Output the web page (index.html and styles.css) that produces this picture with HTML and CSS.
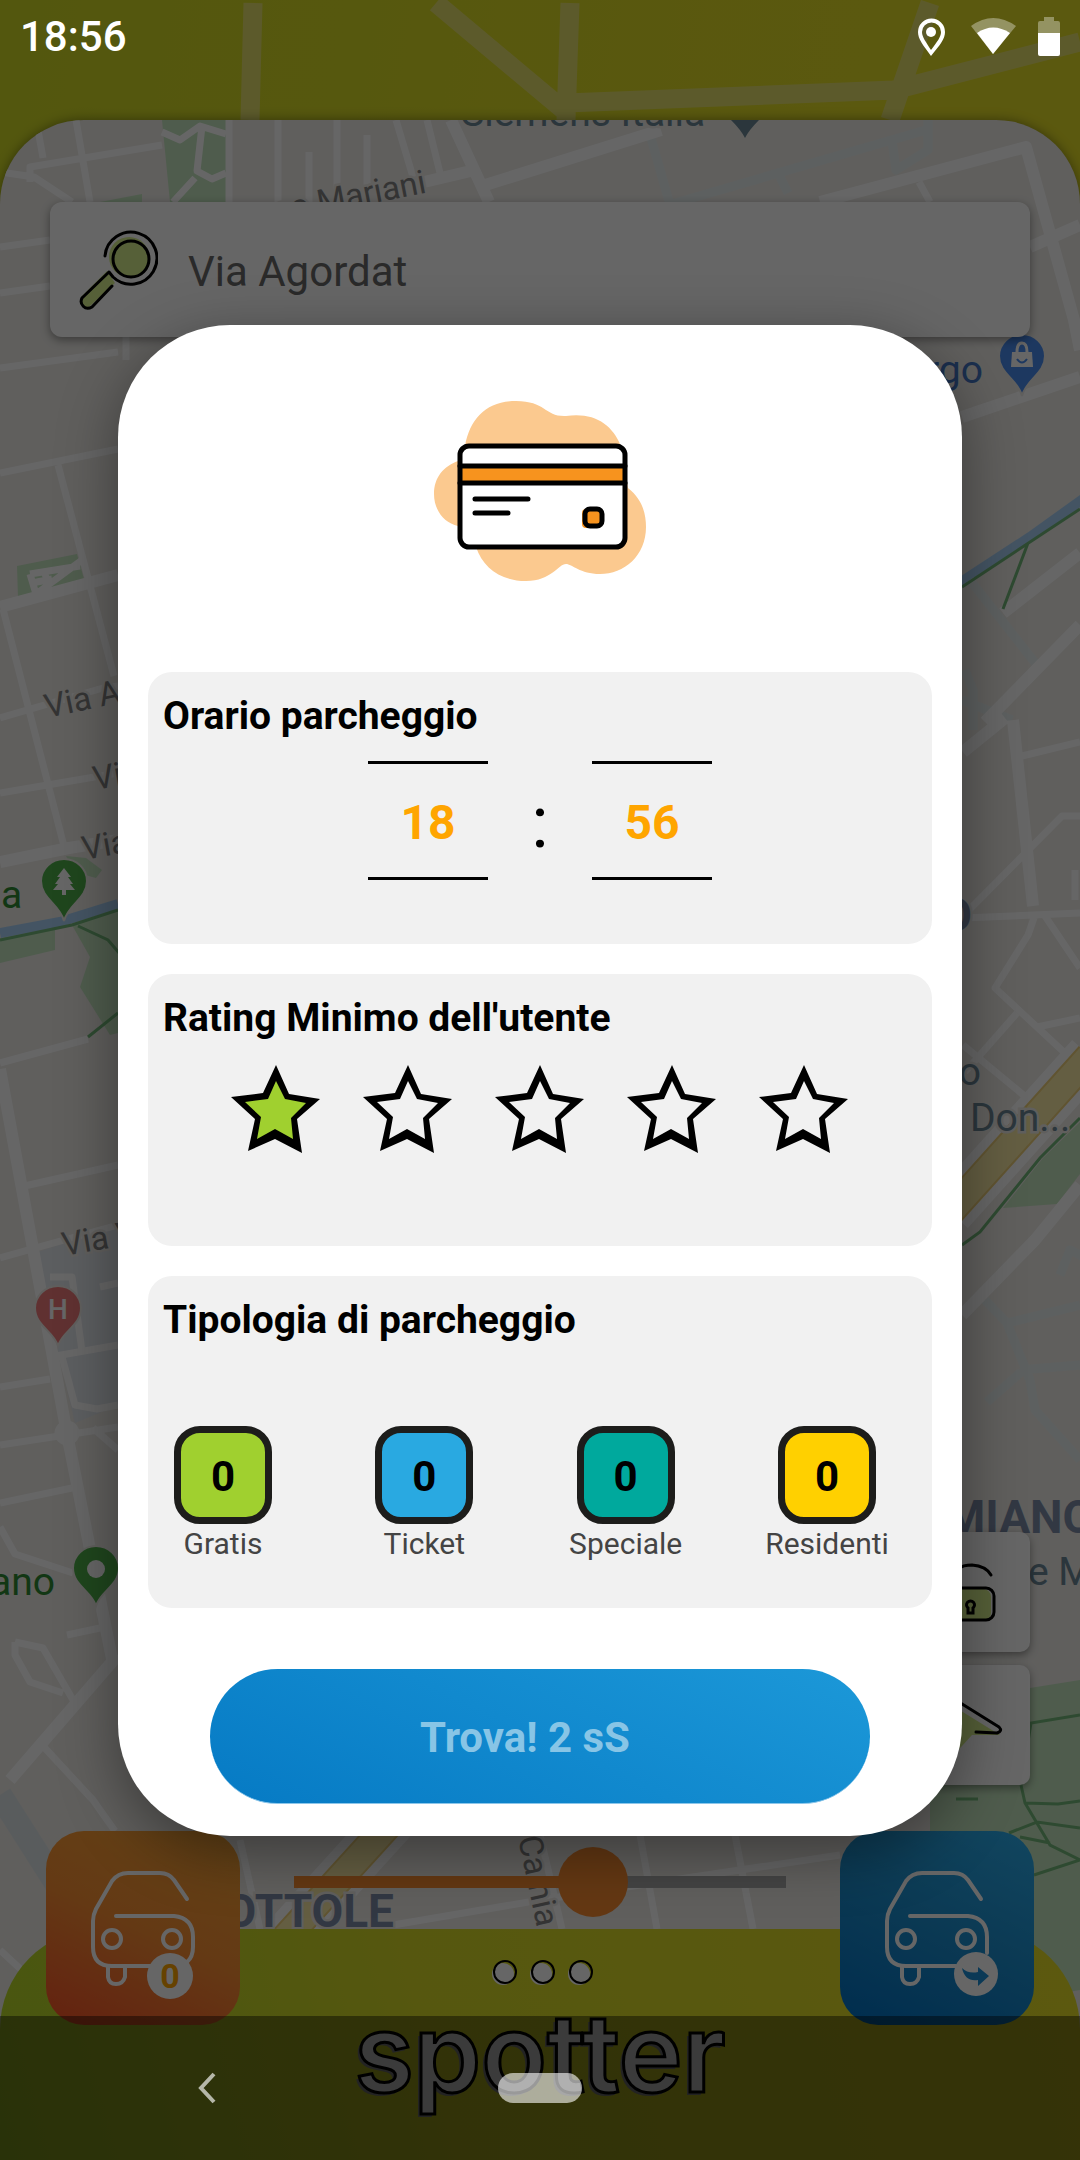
FILE: index.html
```html
<!DOCTYPE html>
<html lang="it">
<head>
  <meta charset="UTF-8" />
  <meta name="viewport" content="width=device-width, initial-scale=1.0" />
  <title>Spotter</title>
  <link rel="stylesheet" href="styles.css">
</head>
<body>
  <div class="screen">
    <svg class="header-roads" viewBox="0 0 1080 120" preserveAspectRatio="xMidYMin slice" aria-hidden="true">
      <path d="M253 3L250 120M436 3L566 112M570 3L566 120M566 103L894 90L1080 42M930 3L890 120" />
    </svg>

    <div class="map">
      <svg viewBox="0 120 1080 2040" preserveAspectRatio="xMidYMin slice" aria-hidden="true">
        <!-- parks, hospital and water -->
        <g fill="#c5e6c0">
          <path d="M162 120h64v82h-56z" />
          <path d="M100 202l42-8v8z" />
          <path d="M17 566l60-12 7 25-66 18z" />
          <path d="M0 938l55-10v22L0 963zM72 925l46-16v124l-8 2-30-48 10-30z" />
          <path d="M66 856l20 2 16 12-6 8-22-6z" />
          <path d="M1003 1208l40-50 37-36v52l-23 30z" />
          <path d="M930 1700l100-12 50-8v310l-50 8-100 0z" />
        </g>
        <path d="M35 1253l83-28v180l-43 18z" fill="#e6eaf1" />
        <path class="river" d="M0 933L60 922L118 904M955 586L1030 537L1090 494" />
        <path class="railroad" d="M0 1795L70 1905" />

        <!-- streets -->
        <g class="pale">
          <path d="M651 138L670 205M672 204L926 130M892 140l4 30 32-20v-30M780 177l8 16" />
          <path d="M970 580L1036 664M965 670l8 20v40M962 700l50 20" />
          <path d="M985 1300l22 23 73-18M1007 1323l23 57 5 30 45 50M1020 1370l60-5M987 1402l34-30M1060 1275l10-25 20 10" />
        </g>
        <g class="streets">
          <path d="M76 120L90 202M38 130L43 158M72 202L34 177L0 172M30 182v-15L162 145" />
          <path d="M229 120V202M278 120V202M337 120V202M309 152V202M367 135V202M396 120L413 177M427 120L441 177" />
          <path d="M162 132l18 8 20-14 26 8M202 126l-5 45 15 8 14-6M195 178l-22 24" />
          <path d="M0 247L50 240M0 293L50 286M919 182L930 202" />
          <path d="M0 368L118 352M126 337V360M0 473L118 449M58 465L114 676M3 609L65 850" />
          <path d="M0 718L103 688L118 686M0 793L118 773M30 574l50-8M30 574l6 20 46-34M44 571l4 12M32 583l20-4" />
          <path d="M0 1063L88 1039M20 1187L118 1165M0 1258L118 1225M0 1387L50 1379M50 1357L118 1345" />
          <path d="M50 1277h22l10 74M100 1287l18-4M62 1357l13 48 22 4 21-4M93 1428L118 1450" />
          <path d="M0 1445L118 1427M0 1503L72 1488M0 1527L15 1554L73 1573M67 1635L100 1628" />
          <path d="M15 1642l28 6 30 52M15 1642v13l15 27 33 11M43 1746L93 1800L115 1831M0 1950L28 1976" />
          <path d="M1022 756L1080 742M963 916L1062 816H1080M963 918L1080 913M1035 915l-7 20-33 53 72 67" />
          <path d="M1045 916L1080 968M963 1045L1027 1098M965 1072L1017 1013M1037 1027L1080 1018M1075 870v30" />
          <path d="M393 1925L540 1900L840 1855M240 1840l20 89M640 1835L657 1929M735 1835L753 1929M540 1835L562 1929" />
        </g>
        <g class="avenues">
          <path d="M451 120L489 202M424 182L475 170M482 186L661 130M820 202L1026 147L1074 320L1080 350" />
          <path d="M1030 247L1080 225M0 607L118 575M0 862L69 848L118 840M962 417L1080 377" />
          <path d="M1003 613L1080 553M985 722L1080 625M963 752L1005 718M1013 720L1033 906" />
          <path d="M0 1069L67 1434L113 1664M10 1780L118 1655M962 1315L1035 1240L1080 1185" />
        </g>
        <circle cx="67" cy="1433" r="9" fill="none" stroke="#fff" stroke-width="7" />

        <!-- yellow trunk road -->
        <path d="M950 1212L1090 1056M400 1812L270 1955" stroke="#fff" stroke-width="48" fill="none" />
        <path class="trunk-edge" d="M950 1212L1090 1056M400 1812L270 1955" />
        <path class="trunk" d="M950 1212L1090 1056M400 1812L270 1955" />

        <!-- footpaths -->
        <path class="footpath" d="M0 940L72 925L118 910M78 926l30 14 12 14M88 1037L118 1013M962 587L1080 509M1028 543L1003 609
          M962 1245l18-13 60-74 40-40M956 1799h22M1021 1785l4 18 25 42 30 15M1025 1803l33 1 22-3M1009 1833l28-11 43 6M1020 1837l30 6M1034 1875l46-15M1021 1785l10-62 49-8" />

        <!-- labels -->
        <g class="label">
          <text class="poi" x="461" y="126">Siemens Italia</text>
          <text class="street" x="276" y="222" transform="rotate(-11 276 222)">so Mariani</text>
          <text class="street" x="47" y="718" transform="rotate(-12 47 718)">Via A</text>
          <text class="street" x="95" y="790" transform="rotate(-10 95 790)">Vi</text>
          <text class="street" x="84" y="860" transform="rotate(-10 84 860)">Via</text>
          <text class="street" x="64" y="1256" transform="rotate(-10 64 1256)">Via V</text>
          <text class="park" x="1" y="908">a</text>
          <text class="park" x="55" y="1595" text-anchor="end">ano</text>
          <text class="shop" x="983" y="383" text-anchor="end">rgo</text>
          <text class="district" x="972" y="931" text-anchor="end">O</text>
          <text class="poi" x="981" y="1085" text-anchor="end">o</text>
          <text class="poi" x="970" y="1131">Don...</text>
          <text class="district" x="945" y="1533">MIANO</text>
          <text class="poi" x="1028" y="1585">e M</text>
          <text class="district" x="394" y="1927" text-anchor="end">OTTOLE</text>
          <text class="street" x="518" y="1838" transform="rotate(78 518 1838)">Ca nia</text>
        </g>

        <!-- pins -->
        <path d="M731 120h28q-10 10-14 18q-4-8-14-18z" fill="#6b8796" />
        <g transform="translate(64 882)">
          <path class="pin" fill="#4eb04a" d="M0 39C-4 22-23 17-23-1A23 22 0 0 1 23-1C23 17 4 22 0 39z" />
          <path fill="#fff" d="M0-14L7-5H4L9 2H6L11 8H2V13H-2V8H-11L-6 2H-9L-4-5H-7z" />
        </g>
        <g transform="translate(1022 357)">
          <path class="pin" fill="#4a8df0" d="M0 39C-4 22-23 17-23-1A23 22 0 0 1 23-1C23 17 4 22 0 39z" />
          <path fill="#fff" d="M-10-5H10L11 10H-11z" />
          <path d="M-5-5q0-9 5-9t5 9" fill="none" stroke="#fff" stroke-width="3" />
          <path d="M-5 2q5 7 10 0" fill="none" stroke="#4a8df0" stroke-width="2" />
        </g>
        <g transform="translate(58 1309)">
          <path class="pin" fill="#f07c7c" d="M0 37C-4 22-23 17-23-1A23 22 0 0 1 23-1C23 17 4 22 0 37z" />
          <text class="pin-letter" x="0" y="10" text-anchor="middle">H</text>
        </g>
        <g transform="translate(96 1569)">
          <path class="pin" fill="#4eb04a" d="M0 37C-4 22-23 17-23-1A23 22 0 0 1 23-1C23 17 4 22 0 37z" />
          <circle r="9" fill="#fff" />
        </g>
      </svg>
    </div>

    <main class="content">
      <label class="search">
        <svg width="80" height="80" viewBox="78 228 80 80" aria-hidden="true">
          <circle cx="129" cy="255" r="20" fill="#d7f08c" />
          <path d="M107 269l8 12-26 24q-10 2-8-10z" fill="#d7f08c" />
          <g fill="none" stroke="#000" stroke-width="3" stroke-linecap="round" stroke-linejoin="round">
            <circle cx="131" cy="257" r="18" />
            <path d="M105 254A26 26 0 1 1 113 275L109 270L82 296C79 302 85 309 92 305L112 284" />
          </g>
        </svg>
        <input type="text" value="Via Agordat" aria-label="Indirizzo" />
      </label>

      <div class="tools">
        <button class="tool" aria-label="Blocca">
          <svg width="80" height="80" viewBox="0 0 80 80" aria-hidden="true">
            <rect x="6" y="37" width="55" height="32" rx="8" fill="#d7f08c" />
            <rect x="6" y="36" width="58" height="32" rx="8" class="line" />
            <path class="line" d="M22 36V28Q24 13 42 13Q56 14 61 23" />
            <path d="M38 56a4 4 0 1 1 5 0v5h-5z" fill="none" stroke="#000" stroke-width="3" />
          </svg>
        </button>
        <button class="tool" aria-label="Centra la mappa">
          <svg width="80" height="80" viewBox="0 0 80 80" aria-hidden="true">
            <path d="M2 8L70 50H42L22 72z" fill="#d7f08c" />
            <path class="line" d="M46 47L67 48Q73 46 69 42L8 4Q2 2 4 8L18 66" />
          </svg>
        </button>
      </div>
    </main>

    <footer class="dock">
      <button class="car car-orange" aria-label="Lascia parcheggio">
        <svg viewBox="0 0 194 194" aria-hidden="true">
          <g class="car-line">
            <path d="M141 68L128 49Q123 42 114 42H82Q72 42 66 50L50 78Q47 84 47 90V116Q47 135 66 135H110M70 85H128Q147 87 147 106V116Q147 126 141 131" />
            <circle cx="66" cy="108" r="9" /><circle cx="126" cy="108" r="9" />
            <path d="M62 135V146Q63 153 70 153T79 146V135" />
          </g>
          <circle cx="124" cy="145" r="23" fill="#fff" />
          <text class="car-count" x="124" y="157" text-anchor="middle">0</text>
        </svg>
      </button>

      <div class="brand">
        <input class="radius" type="range" min="0" max="1000" value="625" aria-label="Raggio" />
        <svg class="dots" width="108" height="28" viewBox="-3 0 108 28" aria-hidden="true">
          <g fill="#fff"><circle cx="14" cy="15" r="11" /><circle cx="52" cy="15" r="11" /><circle cx="90" cy="15" r="11" /></g>
          <g fill="none" stroke="#000" stroke-width="2"><circle cx="16" cy="13" r="11" /><circle cx="54" cy="13" r="11" /><circle cx="92" cy="13" r="11" /></g>
        </svg>
        <span class="logo">spotter</span>
      </div>

      <button class="car car-blue" aria-label="Cerca parcheggio">
        <svg viewBox="0 0 194 194" aria-hidden="true">
          <g class="car-line">
            <path d="M141 68L128 49Q123 42 114 42H82Q72 42 66 50L50 78Q47 84 47 90V116Q47 135 66 135H116M70 85H128Q147 87 147 106V122" />
            <circle cx="66" cy="108" r="9" /><circle cx="126" cy="108" r="9" />
            <path d="M62 135V146Q63 153 70 153T79 146V135" />
          </g>
          <circle cx="136" cy="143" r="22" fill="#fff" />
          <path d="M122 137Q128 143 138 141V136L149 145L138 155V149Q125 151 122 137z" fill="#1c8fd6" />
        </svg>
      </button>
    </footer>
  </div>

  <div class="scrim">
    <form class="modal" role="dialog" aria-label="Cerca parcheggio">
      <svg class="hero" width="212" height="180" viewBox="434 401 212 180" aria-hidden="true">
        <path fill="#fbc98f" d="M465 446C470 418 487 401 516 401C546 401 545 417 566 416C594 412 612 424 621 446L628 488C642 499 646 513 646 527C646 556 624 574 600 574C580 574 572 564 566 564C558 564 552 581 526 581C501 581 483 568 476 547L458 526C444 523 434 510 434 494C434 477 444 466 458 461z" />
        <rect x="460" y="446" width="165" height="101" rx="9" fill="#fff" />
        <path fill="#f7931e" d="M460 467h165v16H460z" />
        <rect x="582" y="509" width="18" height="19" rx="4" fill="#f7931e" />
        <g fill="none" stroke="#000" stroke-width="5" stroke-linecap="round">
          <rect x="460" y="446" width="165" height="101" rx="9" />
          <path d="M460 466H625M460 483H625M475 499H528M475 513H508" />
          <rect x="585" y="509" width="17" height="17" rx="5" />
        </g>
      </svg>

      <section class="card">
        <h2>Orario parcheggio</h2>
        <div class="time">
          <input type="text" inputmode="numeric" value="18" aria-label="Ore" />
          <span>:</span>
          <input type="text" inputmode="numeric" value="56" aria-label="Minuti" />
        </div>
      </section>

      <section class="card">
        <h2>Rating Minimo dell'utente</h2>
        <div class="rating">
          <label><input type="radio" name="rating" value="1" aria-label="1 stella" checked />
            <svg viewBox="0 0 90 90"><path class="edge" d="M45 1L58 30L89 35L66 55L71 89L44 75L17 87L24 55L0 33L32 29z" /><path class="fill" d="M45 17L54 35L75 39L60 54L62 75L44 65L26 75L30 53L14 38L37 35z" /></svg></label>
          <label><input type="radio" name="rating" value="2" aria-label="2 stelle" />
            <svg viewBox="0 0 90 90"><path class="edge" d="M45 1L58 30L89 35L66 55L71 89L44 75L17 87L24 55L0 33L32 29z" /><path class="fill" d="M45 17L54 35L75 39L60 54L62 75L44 65L26 75L30 53L14 38L37 35z" /></svg></label>
          <label><input type="radio" name="rating" value="3" aria-label="3 stelle" />
            <svg viewBox="0 0 90 90"><path class="edge" d="M45 1L58 30L89 35L66 55L71 89L44 75L17 87L24 55L0 33L32 29z" /><path class="fill" d="M45 17L54 35L75 39L60 54L62 75L44 65L26 75L30 53L14 38L37 35z" /></svg></label>
          <label><input type="radio" name="rating" value="4" aria-label="4 stelle" />
            <svg viewBox="0 0 90 90"><path class="edge" d="M45 1L58 30L89 35L66 55L71 89L44 75L17 87L24 55L0 33L32 29z" /><path class="fill" d="M45 17L54 35L75 39L60 54L62 75L44 65L26 75L30 53L14 38L37 35z" /></svg></label>
          <label><input type="radio" name="rating" value="5" aria-label="5 stelle" />
            <svg viewBox="0 0 90 90"><path class="edge" d="M45 1L58 30L89 35L66 55L71 89L44 75L17 87L24 55L0 33L32 29z" /><path class="fill" d="M45 17L54 35L75 39L60 54L62 75L44 65L26 75L30 53L14 38L37 35z" /></svg></label>
        </div>
      </section>

      <section class="card">
        <h2>Tipologia di parcheggio</h2>
        <div class="types">
          <button type="button" class="type"><span class="count free">0</span>Gratis</button>
          <button type="button" class="type"><span class="count ticket">0</span>Ticket</button>
          <button type="button" class="type"><span class="count special">0</span>Speciale</button>
          <button type="button" class="type"><span class="count resident">0</span>Residenti</button>
        </div>
      </section>

      <button type="button" class="submit">Trova! 2 sS</button>
    </form>
  </div>

  <div class="status-bar">
    <span>18:56</span>
    <svg width="142" height="40" viewBox="918 15 142 40" aria-hidden="true">
      <path fill="#fff" fill-rule="evenodd" d="M931 55C923 44 918 38 918 31A13 13 0 0 1 945 31C945 38 940 44 931 55zM931 49C937 41 941 36 941 31A9 9 0 0 0 922 31C922 36 926 41 931 49z" />
      <circle cx="931" cy="31" r="5" fill="#fff" />
      <path fill="#fff" fill-opacity=".35" d="M971 25Q993 9 1016 25L993 53z" />
      <path fill="#fff" d="M977 32Q993 21 1010 32L993 53z" />
      <path fill="#fff" fill-opacity=".35" d="M1038 32V22q0-2 2-2h4v-4h10v4h4q2 0 2 2v10z" />
      <path fill="#fff" d="M1038 32h22v21q0 2-2 2h-18q-2 0-2-2z" />
    </svg>
  </div>

  <div class="nav-bar">
    <button class="back" aria-label="Indietro">
      <svg width="18" height="32" viewBox="0 0 18 32"><path d="M16 2L3 16L16 30" fill="none" stroke="#fff" stroke-opacity=".65" stroke-width="4" /></svg>
    </button>
    <button class="home" aria-label="Home"></button>
  </div>
</body>
</html>
```
FILE: styles.css
```css
* { box-sizing: border-box; }
body { margin: 0; font-family: Roboto, "Liberation Sans", sans-serif; font-size: 42px; }
button, input { font: inherit; border: 0; padding: 0; margin: 0; color: inherit; }
button { background: none; cursor: pointer; }
svg { display: block; }

/* app */
.screen { position: relative; min-height: 100vh; display: flex; flex-direction: column; overflow: hidden; background: linear-gradient(100deg, #cfd924, #e4de26 60%); }
.header-roads { width: 100%; height: 120px; }
.header-roads path { fill: none; stroke: #e6e26c; stroke-width: 19px; }
.map { position: absolute; inset: 120px 0 0; overflow: hidden; background: #efede9; border-radius: 84px 84px 0 0; box-shadow: 0 0 12px rgba(0,0,0,0.4); }
.map svg { width: 100%; height: 100%; }
.streets path, .avenues path, .pale path { fill: none; stroke: #fff; stroke-width: 7px; stroke-linejoin: round; }
.avenues path { stroke-width: 12px; }
.pale path { stroke: #e9f1f1; stroke-width: 9px; }
.river { fill: none; stroke: #aad3f7; stroke-width: 10px; }
.railroad { fill: none; stroke: #dfe6e8; stroke-width: 24px; }
.trunk-edge { fill: none; stroke: #f0d27a; stroke-width: 30px; }
.trunk { fill: none; stroke: #fbeaa6; stroke-width: 26px; }
.footpath { fill: none; stroke: #74b87a; stroke-width: 3px; }
.label text { font-size: 39px; paint-order: stroke; stroke: #efede9; stroke-width: 5px; }
.label .poi { fill: #6b8796; }
.label .street { fill: #828282; font-size: 33px; }
.label .park { fill: #2f8a32; }
.label .shop { fill: #4475c4; }
.label .district { fill: #7d8ca8; font-size: 46px; font-weight: bold; }
.pin { stroke: #efede9; stroke-width: 2px; }
.pin-letter { fill: #fff; font-size: 28px; font-weight: 500; }

.content { position: relative; flex: 1; display: flex; flex-direction: column; justify-content: space-between; padding: 82px 50px 144px; }
.search { display: flex; align-items: center; gap: 30px; height: 135px; padding: 0 28px; background: #fff; border-radius: 12px; box-shadow: 0 3px 10px rgba(0,0,0,0.4); }
.search input { flex: 1; min-width: 0; padding-top: 4px; background: none; color: #6a6a6a; }
.tools { display: flex; flex-direction: column; align-items: flex-end; gap: 13px; }
.tool { display: grid; place-items: center; width: 120px; height: 120px; background: #fff; border-radius: 10px; box-shadow: 0 3px 8px rgba(0,0,0,0.4); }
.line { fill: none; stroke: #000; stroke-width: 3px; stroke-linecap: round; stroke-linejoin: round; }

.dock { position: relative; display: flex; justify-content: space-between; align-items: flex-start; height: 231px; padding: 0 46px; background: linear-gradient(75deg, #b4d82a, #d6da26 40%, #e6de26); border-radius: 100px 100px 0 0; }
.car { flex: none; width: 194px; height: 194px; margin-top: -98px; border-radius: 38px; }
.car-orange { background: linear-gradient(25deg, #fb5228, #fb9034 50%, #f8a838); }
.car-blue { background: linear-gradient(25deg, #0070c3, #1c8fd0 50%, #2dafee); }
.car-line { fill: none; stroke: #fff; stroke-width: 4px; stroke-linecap: round; }
.car-count { font-size: 34px; font-weight: bold; fill: #ffa500; }
.brand { display: flex; flex-direction: column; align-items: center; width: 492px; margin-top: -82px; }
.radius { appearance: none; width: 100%; height: 70px; background: linear-gradient(to right, #fa8c30 60%, #aaa 60%) center / 100% 12px no-repeat; }
.radius::-webkit-slider-thumb { appearance: none; width: 70px; height: 70px; border-radius: 50%; background: #fa8c30; }
.dots { margin-top: 42px; }
.logo { margin-top: 12px; font-family: Inter, Roboto, sans-serif; font-size: 108px; font-weight: 600; line-height: 108px; color: #fff; -webkit-text-stroke: 3px #000; text-shadow: -3px 3px 0 #999; }

/* dialog */
.scrim { position: absolute; inset: 0; display: flex; align-items: center; justify-content: center; padding: 0 118px; background: rgba(0,0,0,0.6); }
.modal { display: flex; flex-direction: column; gap: 30px; width: 100%; padding: 76px 30px 32px; background: #fff; border-radius: 112px; box-shadow: 0 16px 60px rgba(0,0,0,0.4); }
.hero { align-self: center; margin-bottom: 61px; }
.card { padding: 22px 15px 0; background: #f1f1f1; border-radius: 24px; }
.card h2 { margin: 0; font-size: 39px; line-height: 44px; }
.time { display: flex; justify-content: center; align-items: center; padding: 23px 0 64px; }
.time input { width: 120px; height: 119px; padding-top: 4px; text-align: center; background: none; border: solid #000; border-width: 3px 0; color: #ffa500; font-size: 48px; font-weight: bold; }
.time span { width: 104px; padding-top: 4px; text-align: center; font-size: 72px; line-height: 115px; }
.rating { display: flex; justify-content: center; gap: 42px; padding: 24px 0 92px; }
.rating label { position: relative; width: 90px; height: 90px; }
.rating input { position: absolute; opacity: 0; }
.edge { fill: #000; }
.fill { fill: #f1f1f1; }
.rating input:checked + svg .fill { fill: #a0d02f; }
.types { display: flex; justify-content: space-between; margin: 0 15px 0 -15px; padding: 84px 0 46px; }
.type { display: flex; flex-direction: column; align-items: center; gap: 2px; width: 150px; font-size: 30px; line-height: 36px; color: #444; }
.count { display: grid; place-items: center; width: 98px; height: 98px; padding-top: 4px; border: 7px solid #1d1d1b; border-radius: 26px; color: #000; font-size: 42px; font-weight: bold; }
.free { background: #a0d02f; }
.ticket { background: #29a9e1; }
.special { background: #00a99d; }
.resident { background: #ffd000; }
.submit { width: 660px; max-width: 100%; height: 135px; margin-top: 31px; padding: 4px 30px 0 0; align-self: center; border-radius: 68px; border-bottom: 1px solid #8cc6ea; background: linear-gradient(25deg, #067ac4, #1c98d8); color: #88c5e6; font-weight: bold; }

/* system bars */
.status-bar { position: absolute; top: 0; left: 0; right: 0; display: flex; justify-content: space-between; align-items: center; height: 72px; padding: 0 20px; color: #fff; font-weight: 500; }
.nav-bar { position: absolute; bottom: 0; left: 0; right: 0; display: grid; grid-template-columns: 1fr 84px 1fr; align-items: center; height: 144px; background: rgba(0,0,0,0.42); }
.back { justify-self: center; margin-right: 84px; }
.home { height: 30px; border-radius: 15px; background: rgba(255,255,255,0.6); }
```
